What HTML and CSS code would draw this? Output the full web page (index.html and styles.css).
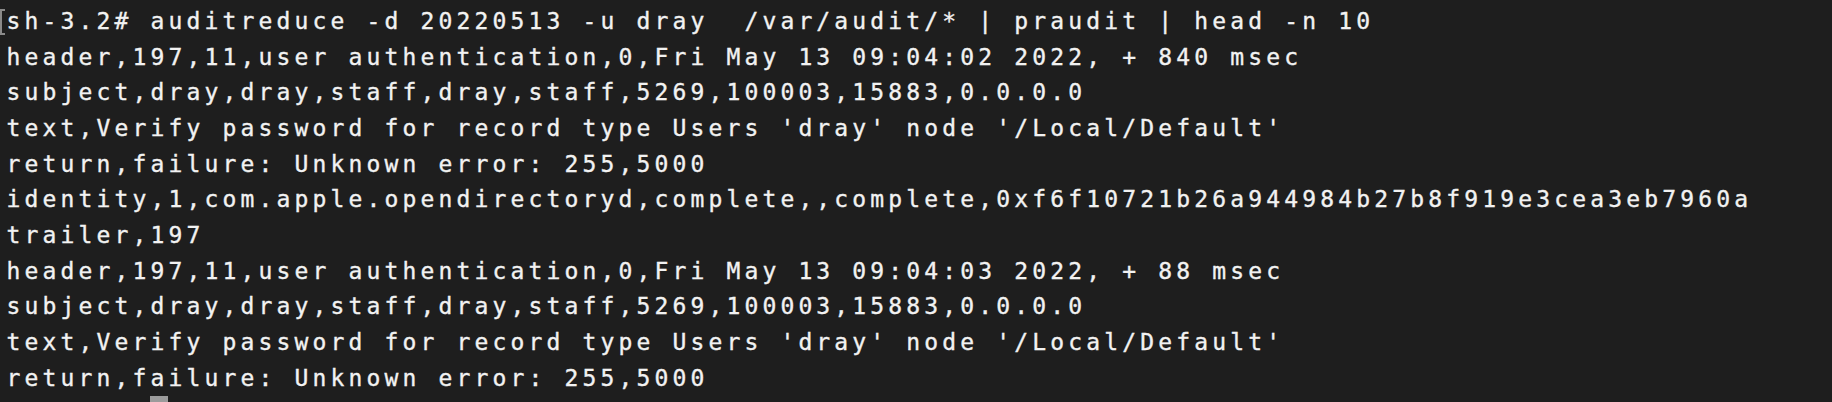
FILE: index.html
```html
<!DOCTYPE html>
<html>
<head>
<meta charset="utf-8">
<link rel="stylesheet" href="styles.css">
</head>
<body>
<div class="term">
<div class="line first"><span class="mark"></span>sh-3.2# auditreduce -d 20220513 -u dray  /var/audit/* | praudit | head -n 10</div>
<div class="line">header,197,11,user authentication,0,Fri May 13 09:04:02 2022, + 840 msec</div>
<div class="line">subject,dray,dray,staff,dray,staff,5269,100003,15883,0.0.0.0</div>
<div class="line">text,Verify password for record type Users 'dray' node '/Local/Default'</div>
<div class="line">return,failure: Unknown error: 255,5000</div>
<div class="line">identity,1,com.apple.opendirectoryd,complete,,complete,0xf6f10721b26a944984b27b8f919e3cea3eb7960a</div>
<div class="line">trailer,197</div>
<div class="line">header,197,11,user authentication,0,Fri May 13 09:04:03 2022, + 88 msec</div>
<div class="line">subject,dray,dray,staff,dray,staff,5269,100003,15883,0.0.0.0</div>
<div class="line">text,Verify password for record type Users 'dray' node '/Local/Default'</div>
<div class="line">return,failure: Unknown error: 255,5000</div>
<div class="line last">        <span class="cursor"> </span></div>
</div>
</body>
</html>
```

FILE: styles.css
```css
html, body {
  margin: 0;
  padding: 0;
  background: #1e1e1e;
  height: 100%;
  overflow: hidden;
}
.term {
  padding: 4px 0 0 6.5px;
  font-family: "DejaVu Sans Mono", "Liberation Mono", monospace;
  font-size: 23px;
  letter-spacing: 4.15px;
  line-height: 35.67px;
  color: #f2f2f2;
  -webkit-text-stroke: 0.35px #f2f2f2;
}
.line {
  white-space: pre;
  height: 35.67px;
}
.first {
  position: relative;
}
.last {
  height: 6px;
  overflow: hidden;
}
.mark {
  position: absolute;
  left: -6.5px;
  top: 5px;
  width: 3px;
  height: 22px;
  border: 2px solid #8a8a8a;
  border-right: none;
}
.cursor {
  display: inline-block;
  width: 18px;
  height: 6px;
  background: #9b9b9b;
  vertical-align: top;
  margin-top: 0;
  letter-spacing: 0;
  -webkit-text-stroke: 0;
}
```
